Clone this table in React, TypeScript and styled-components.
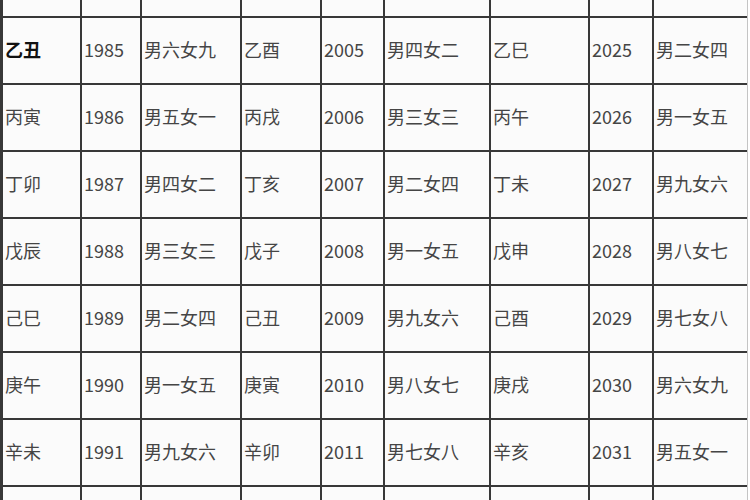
import React from 'react';
import styled, { createGlobalStyle } from 'styled-components';

const GlobalStyle = createGlobalStyle`
  html, body {
    margin: 0;
    padding: 0;
    background: #ffffff;
    overflow: hidden;
  }
`;

type Group = [string, string, string];
type Row = [Group, Group, Group];

const rows: Row[] = [
  [['乙丑', '1985', '男六女九'], ['乙酉', '2005', '男四女二'], ['乙巳', '2025', '男二女四']],
  [['丙寅', '1986', '男五女一'], ['丙戌', '2006', '男三女三'], ['丙午', '2026', '男一女五']],
  [['丁卯', '1987', '男四女二'], ['丁亥', '2007', '男二女四'], ['丁未', '2027', '男九女六']],
  [['戊辰', '1988', '男三女三'], ['戊子', '2008', '男一女五'], ['戊申', '2028', '男八女七']],
  [['己巳', '1989', '男二女四'], ['己丑', '2009', '男九女六'], ['己酉', '2029', '男七女八']],
  [['庚午', '1990', '男一女五'], ['庚寅', '2010', '男八女七'], ['庚戌', '2030', '男六女九']],
  [['辛未', '1991', '男九女六'], ['辛卯', '2011', '男七女八'], ['辛亥', '2031', '男五女一']],
];

export default function App() {
  return (
    <>
      <GlobalStyle />
      <Page>
        <Table>
          {Array.from({ length: 9 }).map((_, i) => (
            <Cell key={`top-${i}`} />
          ))}
          {rows.map((row, r) =>
            row.flatMap((group, g) =>
              group.map((text, c) => (
                <Cell key={`${r}-${g}-${c}`} $bold={r === 0 && g === 0 && c === 0}>
                  {text}
                </Cell>
              ))
            )
          )}
          {Array.from({ length: 9 }).map((_, i) => (
            <Cell key={`bottom-${i}`} />
          ))}
        </Table>
      </Page>
    </>
  );
}

const Page = styled.div`
  width: 750px;
  height: 500px;
  overflow: hidden;
  background: #ffffff;
`;

const Table = styled.div`
  display: grid;
  width: max-content;
  grid-template-columns: 77px 58px 98px 78px 61px 104px 97px 62px 93px;
  grid-template-rows: 16px repeat(7, 65px) 65px;
  gap: 2px;
  padding-left: 3px;
  background: #383838;
  border-right: 1px solid #c4c4c4;
`;

const Cell = styled.div<{ $bold?: boolean }>`
  display: flex;
  align-items: center;
  padding: 0 0 4px 2px;
  background: #fbfbfb;
  color: ${(p) => (p.$bold ? '#111111' : '#454545')};
  font-family: 'Noto Sans CJK SC', 'Liberation Sans', sans-serif;
  font-size: 18px;
  font-weight: ${(p) => (p.$bold ? 700 : 400)};
  white-space: nowrap;
  overflow: hidden;
`;
